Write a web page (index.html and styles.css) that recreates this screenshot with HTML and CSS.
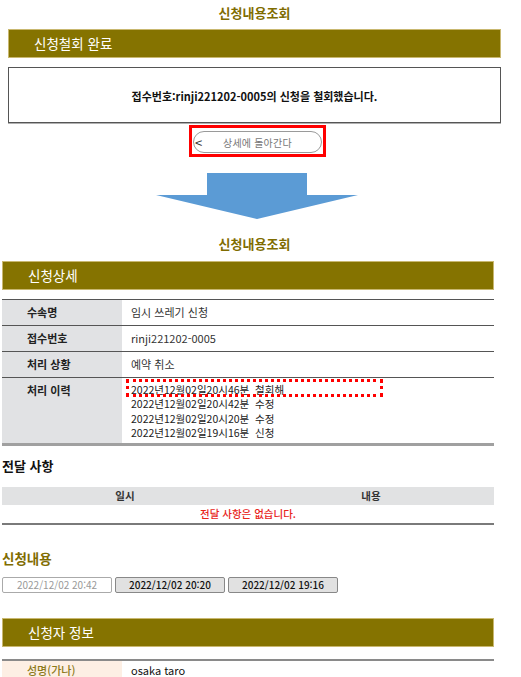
FILE: index.html
```html
<!DOCTYPE html>
<html lang="ko">
<head>
<meta charset="utf-8">
<title>신청내용조회</title>
<link rel="stylesheet" href="styles.css">
</head>
<body>
<div class="top">
  <h1 class="page-title">신청내용조회</h1>
  <div class="bar bar-top">신청철회 완료</div>
  <div class="notice"><p>접수번호:rinji221202-0005의 신청을 철회했습니다.</p></div>
  <div class="back-mark">
    <button class="back-btn"><span class="chev">&lt;</span><span class="back-label">상세에 돌아간다</span></button>
  </div>
  <svg class="arrow" width="202" height="46" viewBox="0 0 202 46"><polygon points="51,0 151,0 151,22 202,22 101,46 0,22 51,22" fill="#5b9bd5"/></svg>
  <h1 class="page-title title2">신청내용조회</h1>
</div>
<div class="main">
  <div class="bar">신청상세</div>
  <div class="detail">
    <div class="lbl">수속명</div><div class="val">임시 쓰레기 신청</div>
    <div class="lbl">접수번호</div><div class="val">rinji221202-0005</div>
    <div class="lbl">처리 상황</div><div class="val">예약 취소</div>
    <div class="lbl lbl-last">처리 이력</div>
    <div class="val val-last history">
      <div>2022년12월02일20시46분&nbsp; 철회해</div>
      <div>2022년12월02일20시42분&nbsp; 수정</div>
      <div>2022년12월02일20시20분&nbsp; 수정</div>
      <div>2022년12월02일19시16분&nbsp; 신청</div>
      <span class="mark"></span>
    </div>
  </div>

  <h2 class="sec-title">전달 사항</h2>
  <div class="msgs">
    <div class="mh">일시</div><div class="mh">내용</div>
    <div class="mempty">전달 사항은 없습니다.</div>
  </div>

  <h2 class="sec-title olive">신청내용</h2>
  <div class="tabs">
    <button class="tab tab-cur">2022/12/02 20:42</button>
    <button class="tab">2022/12/02 20:20</button>
    <button class="tab">2022/12/02 19:16</button>
  </div>

  <div class="bar bar3">신청자 정보</div>
  <div class="person">
    <div class="plbl">성명(가나)</div><div class="pval">osaka taro</div>
  </div>
</div>
</body>
</html>
```

FILE: styles.css
```css
html, body { margin: 0; padding: 0; background: #fff; }
body { font-family: "Noto Sans CJK KR", "Noto Sans", sans-serif; color: #222; }

.top { margin-left: 8px; width: 493px; }
.page-title {
  margin: 0; height: 26px; line-height: 26px; text-align: center;
  font-size: 13px; font-weight: 700; color: #7f6c00;
}
.title2 { margin-top: 12px; }

.bar {
  box-sizing: border-box; height: 29px; line-height: 27px;
  background: #857300; border: 1px solid #c9b870;
  color: #fff; font-size: 13.5px; padding-left: 25px;
}
.bar-top { margin-top: 3px; }

.notice {
  box-sizing: border-box; margin-top: 9px; height: 56px;
  border: 1px solid #555; box-shadow: 0 1px 0 #b0b0b0;
  display: flex; align-items: center; justify-content: center;
}
.notice p { margin: 0; font-size: 11px; font-weight: 700; color: #111; padding-top: 2px; }

.back-mark {
  margin: 2px 0 0 181px; width: 137px; box-sizing: border-box;
  border: 3px solid #f00; padding: 3px 1px 1px 1px;
}
.back-btn {
  display: flex; align-items: center; width: 129px; height: 22px; box-sizing: border-box;
  border: 1px solid #9a9a9a; border-radius: 11px; background: #fff;
  padding: 0 0 0 1px; font-family: inherit; cursor: pointer;
}
.chev { font-size: 13px; color: #333; width: 28px; text-align: left; line-height: 1; }
.back-label { font-size: 10px; color: #777; letter-spacing: 0.2px; }

.arrow { display: block; margin: 16px 0 0 148px; }

.main { margin-left: 2px; width: 492px; }
.main > .bar:first-child { margin-top: 4px; }

.detail {
  margin-top: 9px; border-top: 1px solid #555;
  display: grid; grid-template-columns: 120px 1fr;
  font-size: 11px;
}
.lbl, .val { height: 25px; line-height: 25px; border-bottom: 1px solid #555; }
.lbl { background: #e1e2e4; font-weight: 700; padding-left: 25px; color: #222; }
.val { padding-left: 9px; color: #333; }
.lbl-last, .val-last { border-bottom: 3px solid #a0a0a0; }
.lbl-last { line-height: 14px; padding-top: 5px; height: 60px; }
.history { position: relative; font-size: 10.5px; line-height: 14.3px; padding-top: 5px; height: 60px; color: #222; }
.mark {
  position: absolute; left: 4px; top: 1px; width: 257px; height: 18px; box-sizing: border-box;
  border: 3px dotted #f00;
}

.sec-title { margin: 9px 0 10px; height: 22px; line-height: 22px; font-size: 13px; font-weight: 700; color: #111; }
.sec-title.olive { color: #7f6c00; margin: 22px 0 8px; font-size: 13.5px; }

.msgs { display: grid; grid-template-columns: 1fr 1fr; font-size: 10.5px; border-bottom: 2px solid #7a7a7a; }
.mh { background: #e1e2e3; height: 18px; line-height: 18px; text-align: center; font-weight: 700; color: #333; }
.mempty { grid-column: 1 / 3; height: 18px; line-height: 18px; text-align: center; color: #e8251b; font-weight: 500; }

.tabs { display: flex; gap: 3px; }
.tab {
  box-sizing: border-box; width: 110px; height: 16px; padding: 0;
  font-family: inherit; font-size: 10px; line-height: 14px;
  border: 1px solid #888; border-radius: 2px; background: #e1e1e1; color: #111; font-weight: 500;
}
.tab-cur { background: #fff; color: #999; border-color: #aaa; font-weight: 400; }

.bar3 { margin-top: 25px; }
.person {
  margin-top: 12px; border-top: 2px solid #8a8a8a;
  display: grid; grid-template-columns: 120px 1fr; font-size: 11px;
}
.plbl { background: #fdefe4; color: #8c7a1a; padding-left: 25px; height: 18px; line-height: 18px; font-weight: 500; }
.pval { padding-left: 9px; height: 18px; line-height: 18px; color: #111; }
```
